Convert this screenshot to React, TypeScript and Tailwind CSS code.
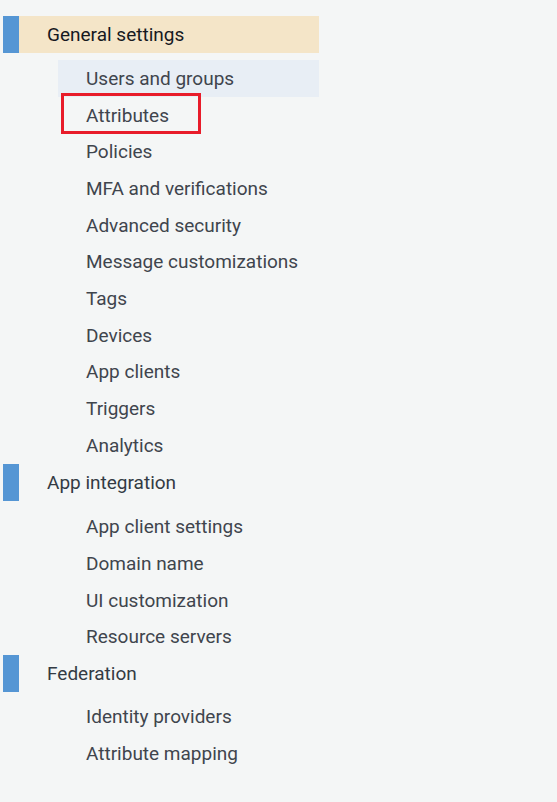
const sections = [
  {
    title: "General settings",
    active: true,
    pad: "pt-[7px]",
    items: [
      "Users and groups",
      "Attributes",
      "Policies",
      "MFA and verifications",
      "Advanced security",
      "Message customizations",
      "Tags",
      "Devices",
      "App clients",
      "Triggers",
      "Analytics",
    ],
  },
  {
    title: "App integration",
    active: false,
    pad: "pt-2",
    items: ["App client settings", "Domain name", "UI customization", "Resource servers"],
  },
  {
    title: "Federation",
    active: false,
    pad: "pt-[6px]",
    items: ["Identity providers", "Attribute mapping"],
  },
];

export default function App() {
  return (
    <div className="min-h-[802px] w-[557px] bg-[#f4f6f6] pt-4 font-['Roboto',sans-serif]">
      <nav className="w-[319px] pl-[3px]">
        {sections.map((s) => (
          <div key={s.title}>
            <div className={`flex h-[37px] items-center ${s.active ? "bg-[#f4e5c8]" : ""}`}>
              <span className="h-full w-4 bg-[#5596d4]" />
              <span
                className={`pl-7 text-[19px] leading-none ${s.active ? "text-[#16191f]" : "text-[#333b44]"}`}
              >
                {s.title}
              </span>
            </div>
            <ul className={s.pad}>
              {s.items.map((item) => (
                <li key={item} className="pl-[55px]">
                  <div
                    className={`relative flex h-[36.7px] items-center pl-7 text-[19px] leading-none text-[#3f454d] ${
                      item === "Users and groups" ? "bg-[#e8eef5]" : ""
                    }`}
                  >
                    {item}
                    {item === "Attributes" && (
                      <span className="absolute left-[3px] top-[-4px] h-[41px] w-[140px] border-[3px] border-[#e81c2a]" />
                    )}
                  </div>
                </li>
              ))}
            </ul>
          </div>
        ))}
      </nav>
    </div>
  );
}
